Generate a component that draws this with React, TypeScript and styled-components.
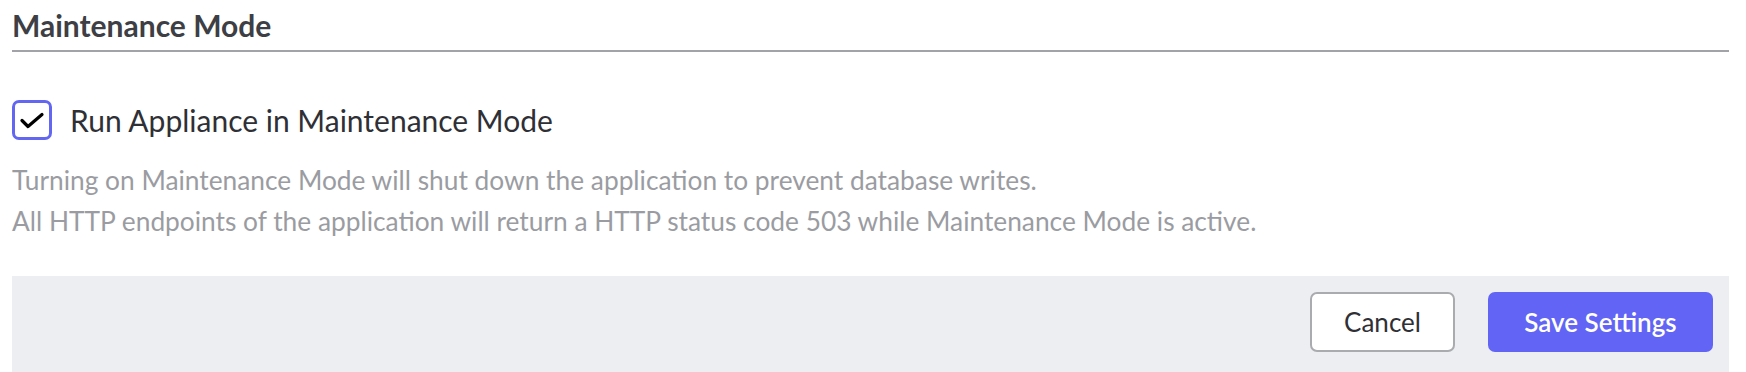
import React from "react";
import styled, { createGlobalStyle } from "styled-components";

const Global = createGlobalStyle`
  html, body { margin: 0; padding: 0; background: #ffffff; overflow: hidden; }
  body { font-family: Lato, "Noto Sans", sans-serif; }
`;

const Page = styled.div`
  display: flex;
  flex-direction: column;
  padding: 0 17px 0 12px;
`;

const Title = styled.h2`
  margin: 0;
  padding-top: 7px;
  padding-bottom: 7px;
  font-size: 30px;
  line-height: 36px;
  font-weight: 700;
  color: #3d3f45;
  border-bottom: 2px solid #a1a3a7;
`;

const Body = styled.div`
  display: flex;
  flex-direction: column;
  padding-top: 48px;
`;

const CheckRow = styled.label`
  display: flex;
  align-items: center;
  gap: 18px;
  cursor: pointer;
`;

const Box = styled.span`
  width: 40px;
  height: 40px;
  box-sizing: border-box;
  border: 3px solid #6366f1;
  border-radius: 7px;
  background: #ffffff;
  display: flex;
  align-items: center;
  justify-content: center;
  flex-shrink: 0;
`;

const LabelText = styled.span`
  font-size: 30px;
  line-height: 40px;
  color: #2f3036;
`;

const Help = styled.p`
  margin: 20px 0 0;
  font-size: 26.3px;
  line-height: 41px;
  color: #9a9ca2;
`;

const Footer = styled.div`
  margin-top: 34px;
  background: #edeef2;
  display: flex;
  justify-content: flex-end;
  align-items: center;
  gap: 33px;
  padding: 16px 16px 30px;
`;

const Button = styled.button<{ $primary?: boolean }>`
  height: 60px;
  box-sizing: border-box;
  border-radius: 7px;
  font-family: Lato, "Noto Sans", sans-serif;
  font-size: 26px;
  cursor: pointer;
  padding: 0 ${(p) => (p.$primary ? "33px" : "32px")};
  min-width: ${(p) => (p.$primary ? "225px" : "145px")};
  border: ${(p) => (p.$primary ? "none" : "2px solid #a9abaf")};
  background: ${(p) => (p.$primary ? "#6264f5" : "#ffffff")};
  color: ${(p) => (p.$primary ? "#ffffff" : "#2f3036")};
  font-weight: ${(p) => (p.$primary ? 600 : 400)};
`;

export default function App() {
  return (
    <>
      <Global />
      <Page>
        <Title>Maintenance Mode</Title>
        <Body>
          <CheckRow>
            <Box>
              <svg width="26" height="26" viewBox="0 0 26 26" fill="none">
                <path d="M3 13.5 L9 19.5 L23 7.5" stroke="#000" strokeWidth="3.2" strokeLinecap="round" strokeLinejoin="round" />
              </svg>
            </Box>
            <LabelText>Run Appliance in Maintenance Mode</LabelText>
          </CheckRow>
          <Help>
            Turning on Maintenance Mode will shut down the application to prevent database writes.
            <br />
            All HTTP endpoints of the application will return a HTTP status code 503 while Maintenance Mode is active.
          </Help>
        </Body>
        <Footer>
          <Button>Cancel</Button>
          <Button $primary>Save Settings</Button>
        </Footer>
      </Page>
    </>
  );
}
